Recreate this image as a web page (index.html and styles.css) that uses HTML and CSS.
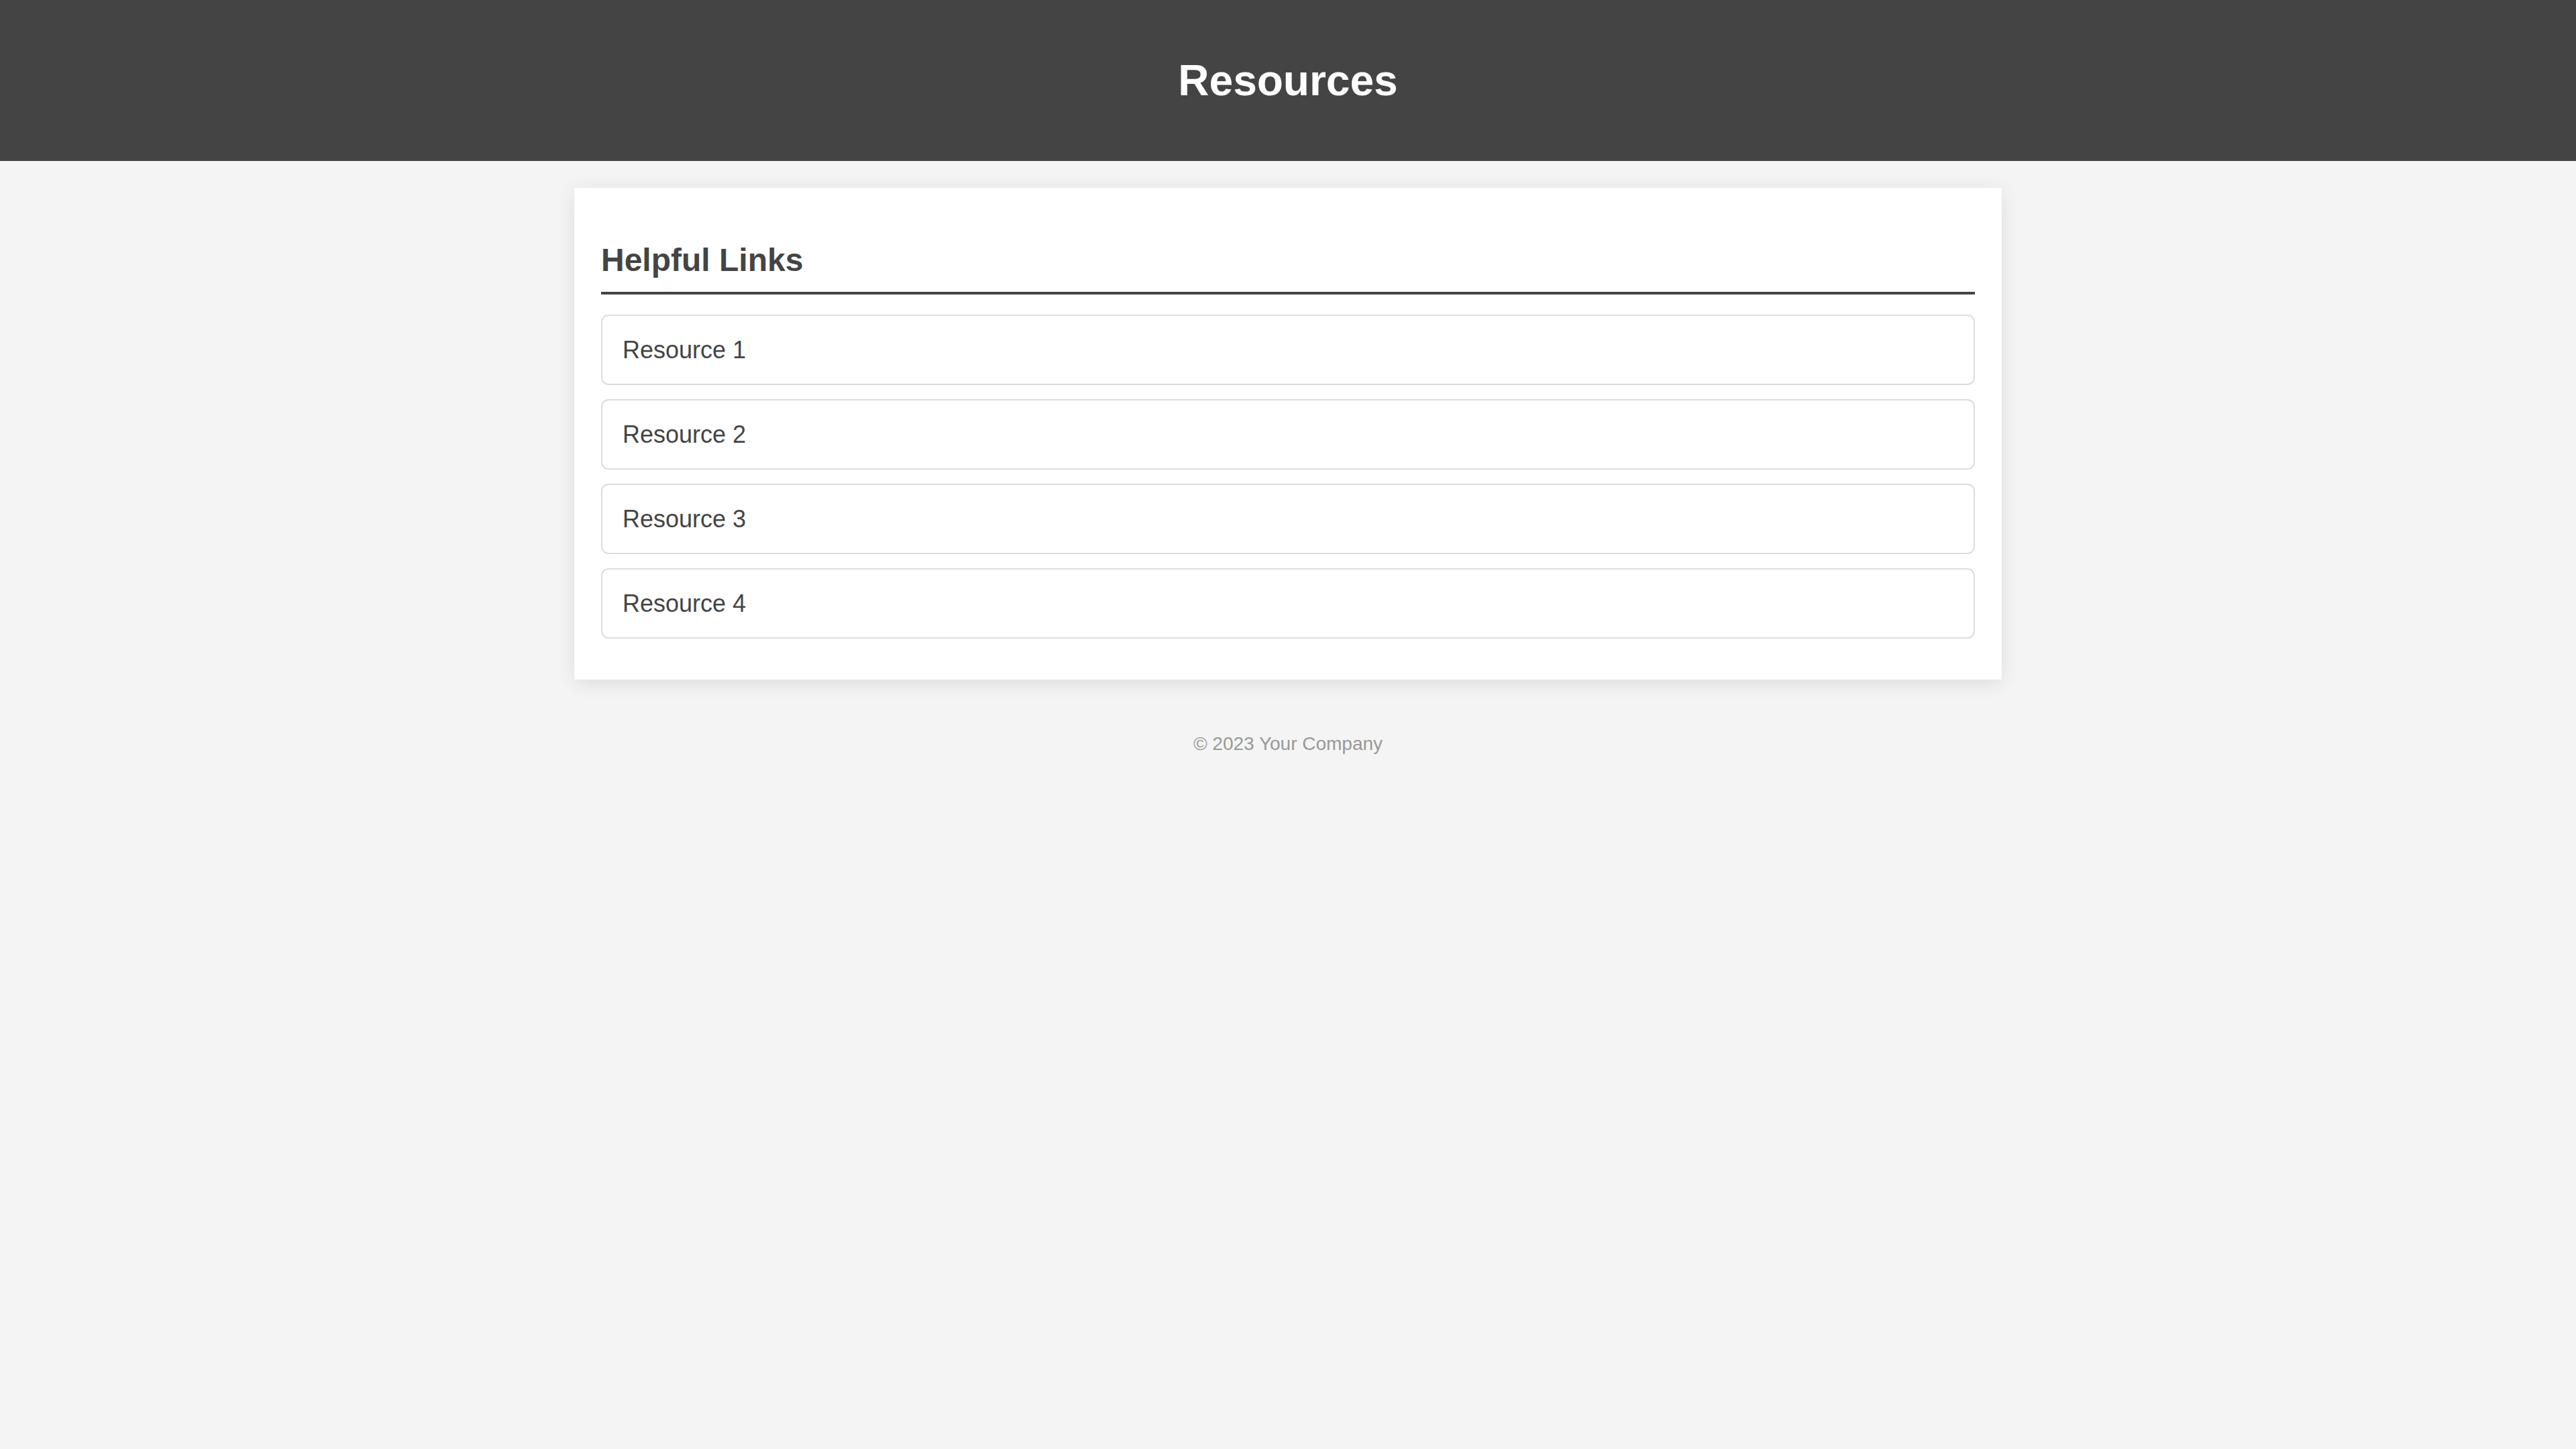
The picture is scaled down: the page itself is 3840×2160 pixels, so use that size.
FILE: index.html
```html
<!DOCTYPE html>
<html lang="en">
<head>
<meta charset="utf-8">
<title>Resources</title>
<link rel="stylesheet" href="styles.css">
</head>
<body>
<header class="site-header">
  <h1 class="site-title">Resources</h1>
</header>
<main class="card">
  <h2 class="card-title">Helpful Links</h2>
  <ul class="link-list">
    <li class="link-item"><a href="#">Resource 1</a></li>
    <li class="link-item"><a href="#">Resource 2</a></li>
    <li class="link-item"><a href="#">Resource 3</a></li>
    <li class="link-item"><a href="#">Resource 4</a></li>
  </ul>
</main>
<footer class="site-footer">© 2023 Your Company</footer>
</body>
</html>
```

FILE: styles.css
```css
html, body {
  margin: 0;
  padding: 0;
}
body {
  background: #f4f4f4;
  font-family: "Liberation Sans", Arial, sans-serif;
  color: #444;
}
.site-header {
  background: #444;
  color: #fff;
  text-align: center;
  padding: 83px 0;
}
.site-title {
  margin: 0;
  font-size: 64px;
  line-height: 74px;
  font-weight: bold;
}
.card {
  display: block;
  width: 2128px;
  box-sizing: border-box;
  margin: 40px auto 0;
  background: #fff;
  padding: 38px 40px 40px;
  box-shadow: 0 5px 26px rgba(0, 0, 0, 0.1);
}
.card-title {
  margin: 0 0 30px;
  font-size: 48px;
  line-height: 55px;
  font-weight: bold;
  color: #444;
  padding: 42px 0 20px;
  border-bottom: 4px solid #444;
}
.link-list {
  list-style: none;
  margin: 0;
  padding: 0;
  display: flex;
  flex-direction: column;
  gap: 21px;
  padding-bottom: 21px;
}
.link-item {
  border: 2px solid #ddd;
  border-radius: 11px;
  padding: 29px 30px;
  font-size: 36px;
  line-height: 43px;
}
.link-item a {
  color: #444;
  text-decoration: none;
}
.site-footer {
  text-align: center;
  color: #999;
  font-size: 28px;
  line-height: 32px;
  padding-top: 80px;
}
```
